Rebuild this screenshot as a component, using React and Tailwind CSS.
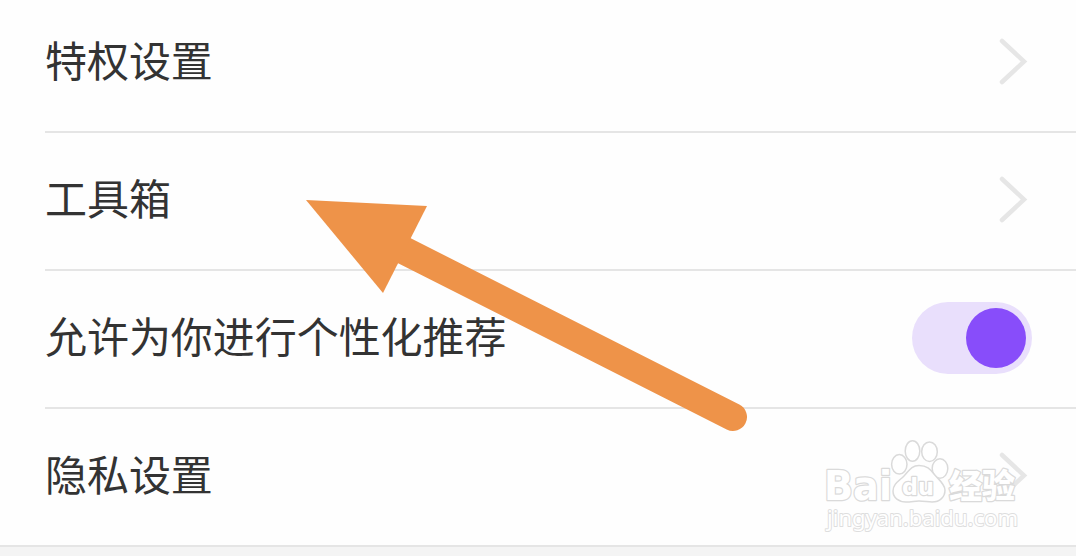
const ChevronIcon = () => (
  <svg className="mb-[2px] h-[50px] w-[30px]" viewBox="0 0 30 50" fill="none">
    <path d="M4 5 26 25.5 4 46" stroke="#e6e6e6" strokeWidth="4.5" strokeLinecap="round" />
  </svg>
);

const Toggle = () => (
  <button
    type="button"
    role="switch"
    aria-checked="true"
    className="flex h-[72px] w-[120px] items-center justify-end rounded-full bg-[#e9dffc] pr-[6px]"
  >
    <span className="h-[60px] w-[60px] rounded-full bg-[#884dfa]" />
  </button>
);

const SettingRow = ({ label, children }) => (
  <div className="flex h-[138px] shrink-0 items-center justify-between border-b-2 border-[#e5e5e5] pb-[2px]">
    <span className="mb-[6px] text-[42px] leading-none tracking-[-0.05px] text-[#333333]">{label}</span>
    {children}
  </div>
);

const Arrow = () => (
  <svg className="absolute left-[300px] top-[190px] h-[250px] w-[460px]" viewBox="300 190 460 250">
    <path d="M399 248 733 417" stroke="#ee9349" strokeWidth="28" strokeLinecap="round" />
    <path d="M306 200 427 206 383 293Z" fill="#ee9349" />
  </svg>
);

const Watermark = () => (
  <svg
    className="absolute left-[816px] top-[432px] h-[106px] w-[214px]"
    viewBox="816 432 214 106"
    fill="#ffffff"
    stroke="#dadada"
    strokeWidth="1.5"
    strokeLinejoin="round"
  >
    <text x="824" y="500" fontSize="40" fontWeight="700" textLength="68" lengthAdjust="spacingAndGlyphs" className="font-['DejaVu_Sans']" strokeWidth="2.5" paintOrder="stroke">Bai</text>
    <ellipse cx="899.3" cy="464.3" rx="7.7" ry="9.7" />
    <ellipse cx="912.5" cy="451" rx="7.3" ry="10.2" />
    <ellipse cx="929.5" cy="451.7" rx="7.8" ry="9.8" />
    <ellipse cx="940" cy="468.5" rx="7.8" ry="9.7" />
    <path d="M919 465.5C911 465.5 909 471 904 476C899 481 893 484 893 491C893 498 899 502 906 502C911 502 915 501 919 501C924 501 928 502 932 502C940 502 945 497 945 490C945 484 938 479 934 474C930 469 927 465.5 919 465.5Z" />
    <text x="902" y="495" fontSize="23" fontWeight="700" textLength="32" lengthAdjust="spacingAndGlyphs" className="font-['DejaVu_Sans']" strokeWidth="2.5" paintOrder="stroke">du</text>
    <text x="949" y="498" fontSize="33" fontWeight="900" textLength="66" className="font-['Noto_Sans_CJK_SC',sans-serif]" strokeWidth="2.5" paintOrder="stroke">经验</text>
    <text x="827" y="526" fontSize="22.5" textLength="191" lengthAdjust="spacingAndGlyphs" className="font-['Noto_Sans']" stroke="#dedede" strokeWidth="2" paintOrder="stroke">jingyan.baidu.com</text>
  </svg>
);

const App = () => (
  <main className="relative h-[556px] w-[1076px] overflow-hidden bg-[#fefefe] font-['Noto_Sans_CJK_SC',sans-serif]">
    <div className="-mt-[5px] flex h-[561px] flex-col bg-[#f4f4f4]">
      <div className="bg-[#fefefe] pl-[45px] [&>div]:pr-[48px]">
        <SettingRow label="特权设置">
          <ChevronIcon />
        </SettingRow>
        <SettingRow label="工具箱">
          <ChevronIcon />
        </SettingRow>
        <SettingRow label="允许为你进行个性化推荐">
          <div className="-mr-[4px]">
            <Toggle />
          </div>
        </SettingRow>
      </div>
      <div className="bg-[#fefefe] [&>div]:pr-[48px] [&>div]:pl-[45px]">
        <SettingRow label="隐私设置">
          <ChevronIcon />
        </SettingRow>
      </div>
    </div>
    <Arrow />
    <Watermark />
  </main>
);

export default App;
